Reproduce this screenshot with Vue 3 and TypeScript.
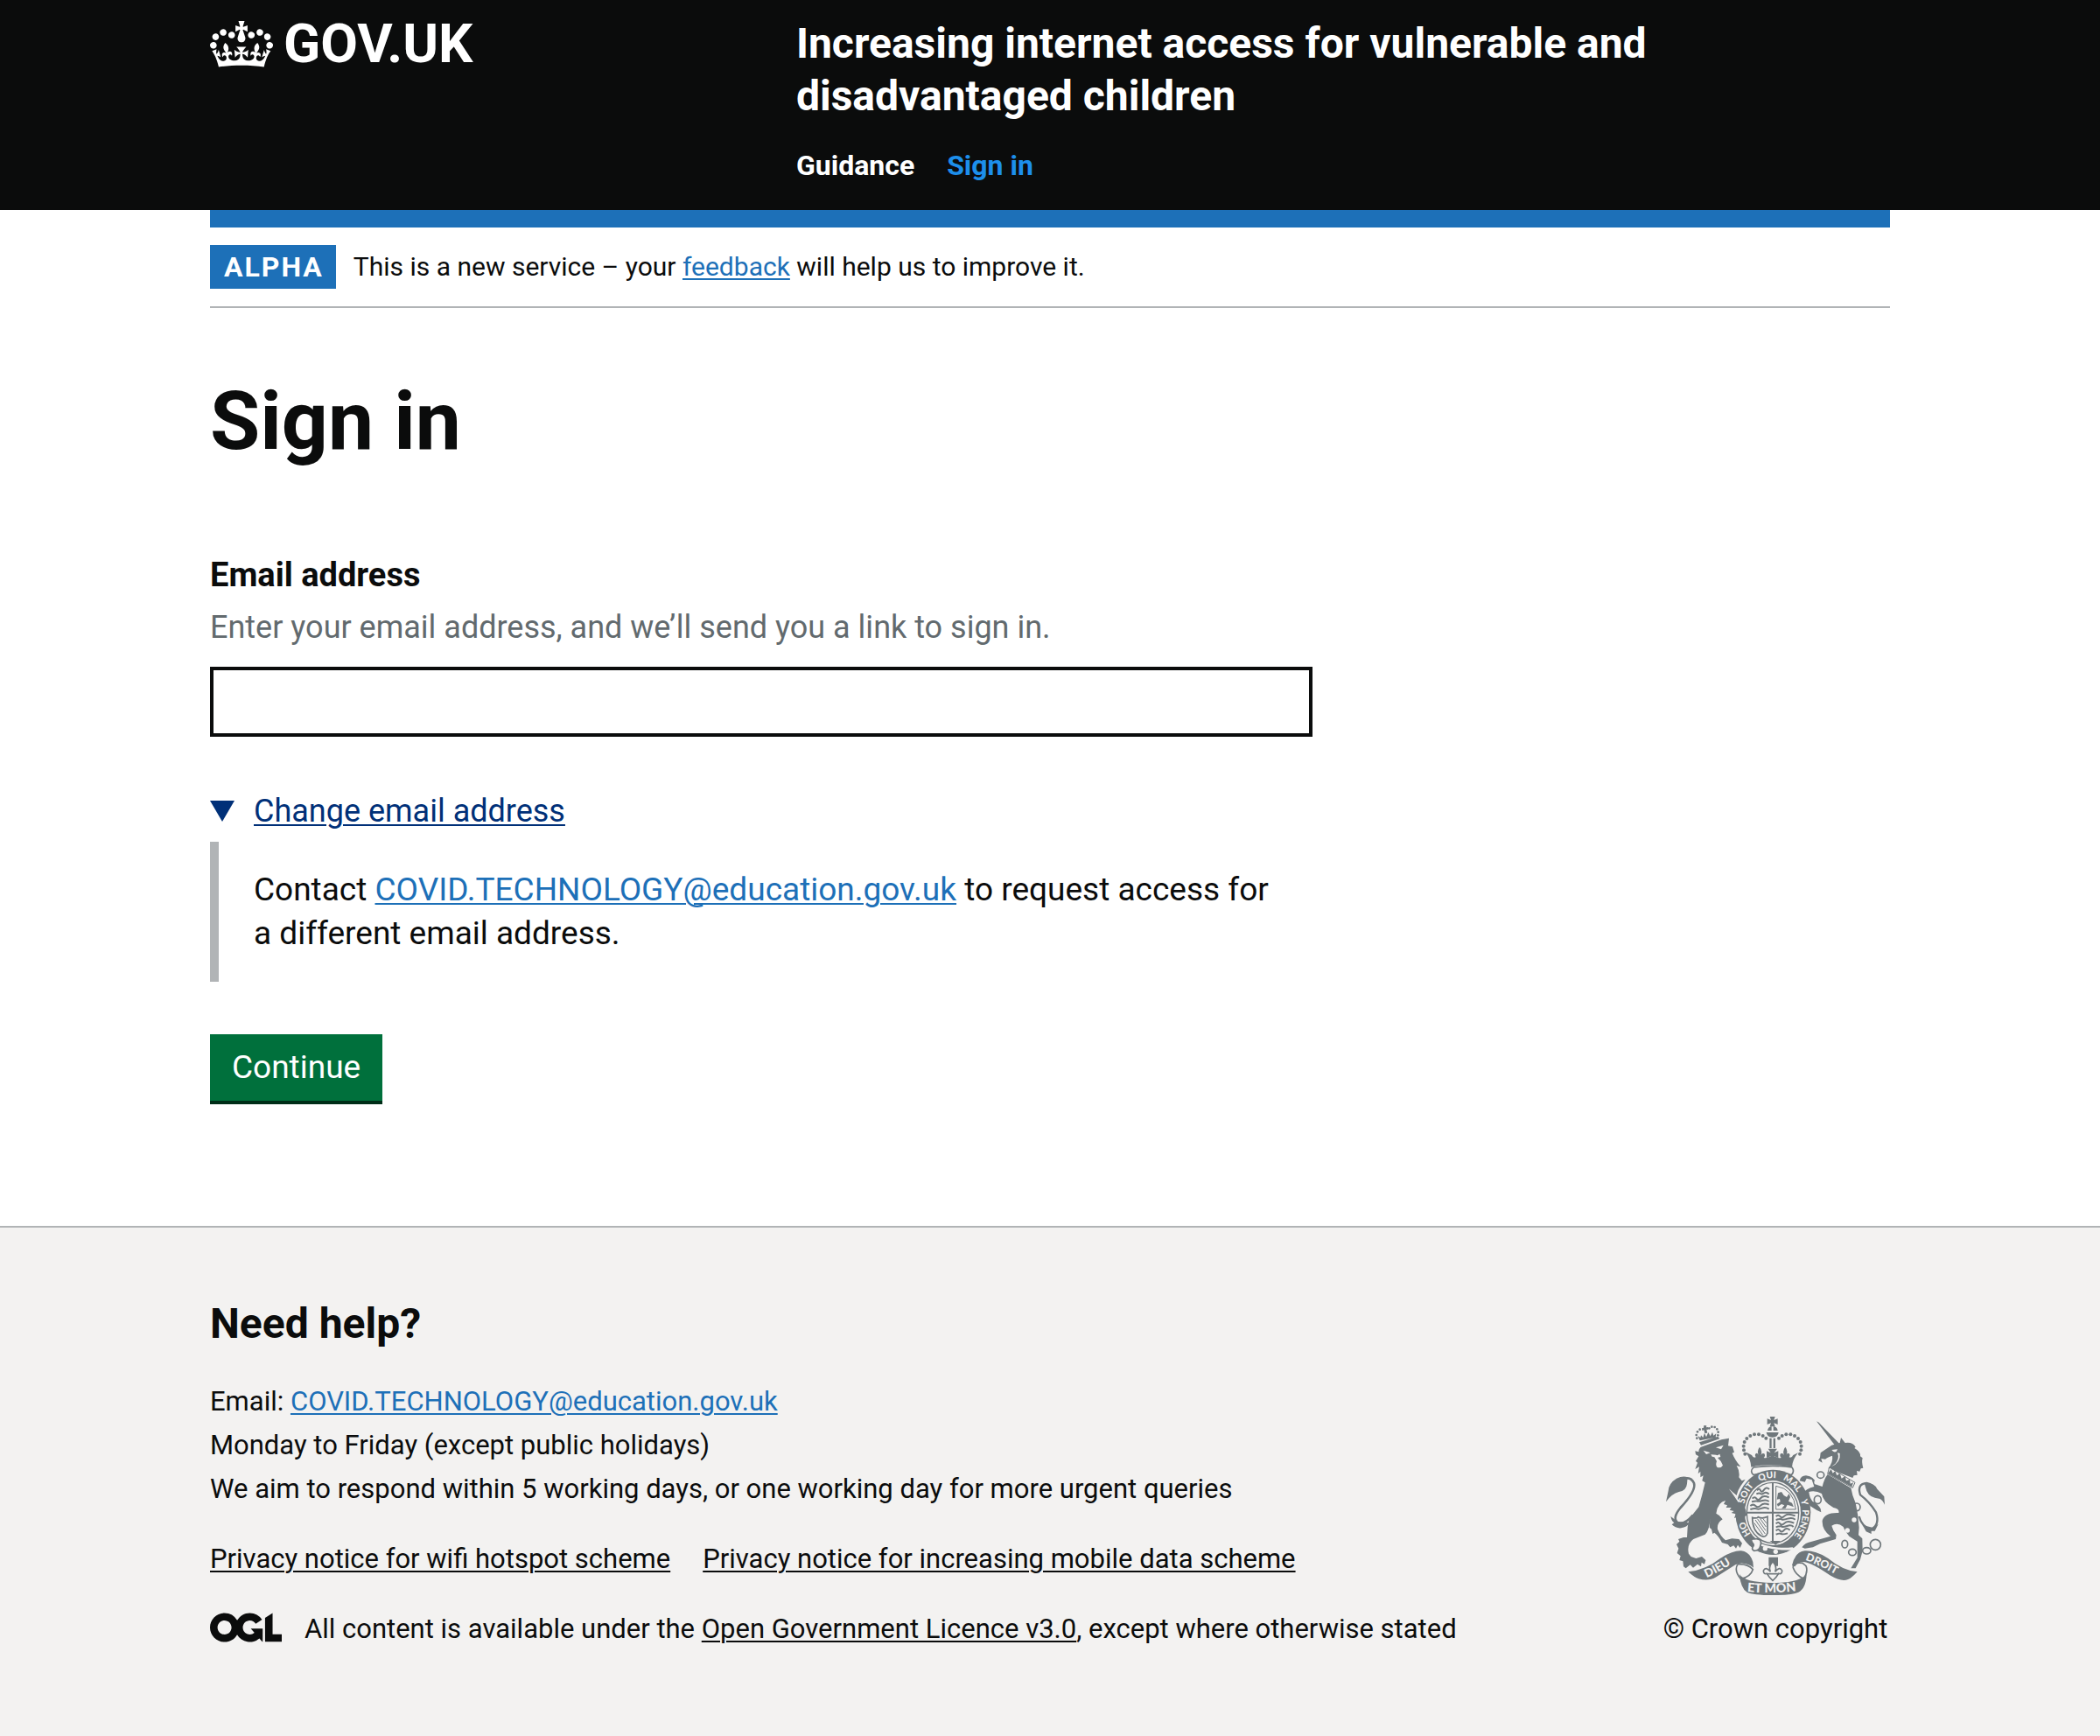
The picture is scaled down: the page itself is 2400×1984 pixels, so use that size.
<script setup lang="ts">
import { ref } from 'vue'

const email = ref('')
const supportEmail = 'COVID.TECHNOLOGY@education.gov.uk'

const privacyLinks = [
  'Privacy notice for wifi hotspot scheme',
  'Privacy notice for increasing mobile data scheme',
]

// Pearls on the left arch of the royal crown; the right arch mirrors them.
const pearls = [
  [343, 188], [339, 175], [338, 161], [341, 147], [349, 135],
  [361, 126], [375, 121], [390, 121], [404, 126], [415, 134],
]
const mirror = (x: number) => 874 - x

// Words of the garter motto and how far round the ellipse each one starts.
const motto = [
  { text: 'HO', at: '13%' },
  { text: 'SOIT', at: '29%' },
  { text: 'QUI', at: '43%' },
  { text: 'MAL', at: '55%' },
  { text: 'Y', at: '69%' },
  { text: 'PENSE', at: '74%' },
]
</script>

<template>
  <div class="page">
    <header class="header">
      <div class="container header-row">
        <div class="header-logo">
          <a href="#" class="logo-link">
            <svg class="crown" viewBox="0 0 132 97" aria-hidden="true">
              <path fill="currentColor" fill-rule="evenodd" d="M25 30.2c3.5 1.5 7.7-.2 9.1-3.7 1.5-3.6-.2-7.8-3.9-9.2-3.6-1.4-7.6.3-9.1 3.9-1.4 3.5.3 7.5 3.9 9zM9 39.5c3.6 1.5 7.8-.2 9.2-3.7 1.5-3.6-.2-7.8-3.9-9.1-3.6-1.5-7.6.2-9.1 3.8-1.4 3.5.3 7.5 3.8 9zM4.4 57.2c3.5 1.5 7.7-.2 9.1-3.8 1.5-3.6-.2-7.7-3.9-9.1-3.5-1.5-7.6.3-9.1 3.8-1.4 3.5.3 7.6 3.9 9.1zm38.3-21.4c3.5 1.5 7.7-.2 9.1-3.8 1.5-3.6-.2-7.7-3.9-9.1-3.6-1.5-7.6.3-9.1 3.8-1.3 3.6.4 7.7 3.9 9.1zm64.4-5.6c-3.6 1.5-7.8-.2-9.1-3.7-1.5-3.6.2-7.8 3.8-9.2 3.6-1.4 7.7.3 9.2 3.9 1.3 3.5-.4 7.5-3.9 9zm15.9 9.3c-3.6 1.5-7.7-.2-9.1-3.7-1.5-3.6.2-7.8 3.7-9.1 3.6-1.5 7.7.2 9.2 3.8 1.5 3.5-.3 7.5-3.8 9zm4.7 17.7c-3.6 1.5-7.8-.2-9.2-3.8-1.5-3.6.2-7.7 3.9-9.1 3.6-1.5 7.7.3 9.2 3.8 1.3 3.5-.4 7.6-3.9 9.1zM89.3 35.8c-3.6 1.5-7.8-.2-9.2-3.8-1.4-3.6.2-7.7 3.9-9.1 3.6-1.5 7.7.3 9.2 3.8 1.4 3.6-.3 7.7-3.9 9.1zM69.7 17.7l8.9 4.7V9.3l-8.9 2.8c-.2-.3-.5-.6-.9-.9L72.4 0H59.6l3.5 11.2c-.3.3-.6.5-.9.9l-8.8-2.8v13.1l8.8-4.7c.3.3.6.7.9.9l-5 15.4v.1c-.2.8-.4 1.6-.4 2.4 0 4.1 3.1 7.5 7 8.1h.2c.3 0 .7.1 1 .1.4 0 .7 0 1-.1h.2c4-.6 7.1-4.1 7.1-8.1 0-.8-.1-1.7-.4-2.4V34l-5.1-15.4c.4-.2.7-.6 1-.9zM66 92.8c16.9 0 32.8 1.1 47.1 3.2 4-16.9 8.9-26.7 14-33.5l-9.6-3.4c1 4.9 1.1 7.2 0 10.2-1.5-1.4-3-4.3-4.2-8.7L108.6 76c2.8-2 5-3.2 7.5-3.3-4.4 9.4-10 11.9-13.6 11.2-4.3-.8-6.3-4.6-5.6-7.9 1-4.7 5.7-5.9 8-.5 4.3-8.7-3-11.4-7.6-8.8 7.1-7.2 7.9-13.5 2.1-21.1-8 6.1-8.1 12.3-4.5 20.8-4.7-5.4-12.1-2.5-9.5 6.2 3.4-5.2 7.9-2 7.2 3.1-.6 4.3-6.4 7.8-13.5 7.2-10.3-.9-10.9-8-11.2-13.8 2.5-.5 7.1 1.8 11 7.3L80.2 60c-4.1 4.4-8 5.3-12.3 5.4 1.4-4.4 8-11.6 8-11.6H55.5s6.4 7.2 7.9 11.6c-4.2-.1-8-1-12.3-5.4l1.4 16.4c3.9-5.5 8.5-7.7 10.9-7.3-.3 5.8-.9 12.8-11.1 13.8-7.2.6-12.9-2.9-13.5-7.2-.7-5 3.8-8.3 7.1-3.1 2.7-8.7-4.6-11.6-9.4-6.2 3.7-8.5 3.6-14.7-4.6-20.8-5.8 7.6-5 13.9 2.2 21.1-4.7-2.6-11.9.1-7.7 8.8 2.3-5.5 7.1-4.2 8.1.5.7 3.3-1.3 7.1-5.7 7.9-3.5.7-9-1.8-13.5-11.2 2.5.1 4.7 1.3 7.5 3.3l-4.7-15.4c-1.2 4.4-2.7 7.2-4.3 8.7-1.1-3-.9-5.3 0-10.2l-9.5 3.4c5 6.9 9.9 16.7 14 33.5 14.8-2.1 30.8-3.2 47.7-3.2z" />
            </svg>
            <span>GOV.UK</span>
          </a>
        </div>
        <div class="header-content">
          <a href="#" class="service-name">Increasing internet access for vulnerable and disadvantaged children</a>
          <nav class="nav">
            <a href="#">Guidance</a>
            <a href="#" class="active" aria-current="page">Sign in</a>
          </nav>
        </div>
      </div>
    </header>

    <div class="container body">
      <div class="phase-banner">
        <strong class="tag">ALPHA</strong>
        <span>This is a new service – your <a href="#" class="link">feedback</a> will help us to improve it.</span>
      </div>

      <main class="main">
        <h1>Sign in</h1>
        <form @submit.prevent>
          <label for="email">Email address</label>
          <p id="email-hint" class="hint">Enter your email address, and we’ll send you a link to sign in.</p>
          <input id="email" v-model="email" type="email" aria-describedby="email-hint" />
          <details open>
            <summary><span>Change email address</span></summary>
            <div class="details-text">
              Contact <a href="#" class="link">{{ supportEmail }}</a> to request access for a different email address.
            </div>
          </details>
          <button type="submit">Continue</button>
        </form>
      </main>
    </div>

    <footer class="footer">
      <div class="container footer-row">
        <div class="footer-main">
          <h2>Need help?</h2>
          <p>
            Email: <a href="#" class="link">{{ supportEmail }}</a><br />
            Monday to Friday (except public holidays)<br />
            We aim to respond within 5 working days, or one working day for more urgent queries
          </p>
          <ul class="footer-links">
            <li v-for="item in privacyLinks" :key="item"><a href="#">{{ item }}</a></li>
          </ul>
          <div class="licence">
            <svg class="ogl" viewBox="0 0 483.2 195.7" aria-hidden="true">
              <path fill="currentColor" d="M421.5 142.8V.1l-50.7 32.3v161.1h112.4v-50.7zm-122.3-9.6A47.12 47.12 0 0 1 221 97.8c0-26 21.1-47.1 47.1-47.1 16.7 0 31.4 8.7 39.7 21.8l42.7-27.2A97.63 97.63 0 0 0 268.1 0c-36.5 0-68.3 20.1-85.1 49.7A98 98 0 0 0 97.8 0C43.9 0 0 43.9 0 97.8s43.9 97.8 97.8 97.8c36.5 0 68.3-20.1 85.1-49.7a97.76 97.76 0 0 0 149.6 25.4l19.4 22.2h3v-87.8h-80l24.3 27.5zM97.8 145c-26 0-47.1-21.1-47.1-47.1s21.1-47.1 47.1-47.1 47.1 21.1 47.1 47.1S123.8 145 97.8 145" />
            </svg>
            <span>All content is available under the <a href="#">Open Government Licence v3.0</a>, except where otherwise stated</span>
          </div>
        </div>

        <a href="#" class="copyright">
          <svg class="crest" viewBox="72 60 750 612" aria-hidden="true">
            <g class="ink">
              <!-- Royal crown -->
              <template v-for="[x, y] in pearls" :key="`${x}-${y}`">
                <circle :cx="x" :cy="y" r="6" />
                <circle :cx="mirror(x)" :cy="y" r="6" />
              </template>
              <path d="M428 60h18l-4 12 13-5v20l-13-5 4 12h-18l4-12-13 5V67l13 5z" />
              <path d="M420 108q2-14 14-15v15zm20-15q13 1 15 15h-15zM416 114h42q-2 17-21 17t-21-17z" />
              <path d="M427 134h7v34h-7zm13 0h7v34h-7zM422 170h31l-10 14 14-6v24l-14-6 7 10h-26l7-10-14 6v-24l14 6z" />
              <path d="M350 184l16 8q6 12 14 7-6-10 2-14 7 0 8 8-8-16 3-29 11 13 4 29 4-10 12-6 5 8-2 14 10 2 18-3h24q10 6 18 3-7-6-2-14 8-4 12 6-7-16 4-29 11 13 3 29 1-8 8-8 8 4 2 14 8 5 14-7l17-8q-20 24-21 49-30-7-70-7t-70 7q-2-28-18-49z" />
              <path class="line" d="M372 234q66-10 132 0 10 14-2 26-66-18-130 0-14-12 0-26z" stroke-width="5" />

              <!-- Garter and belt -->
              <ellipse cx="439" cy="388" rx="129" ry="146" />
              <ellipse class="paper" cx="438" cy="390" rx="96" ry="111" />
              <ellipse class="line" cx="438" cy="390" rx="89" ry="104" stroke-width="4" />
              <path d="M351 386h176v6H351zM435 287h6v208h-6z" />

              <!-- Quarters: three lions, rampant lion, harp -->
              <g class="line" stroke-width="6">
                <path d="M384 313q8-10 12 0t12-2 18-2M382 325q10-4 14-1t12-2 17 4" />
                <path d="M368 341q8-9 14 0t15-2 28-2M366 352q14-4 18-2t18-2 23 3" />
                <path d="M361 366q10-8 18 0t18-2 28-2M361 378q16-5 22-2t18-2 24 3" />
                <path d="M449 402q8-8 14 0t16-2 36 0M449 414q16-5 20-2t20-2 26 3" />
                <path d="M449 427q8-8 14 0t16-2 32 0M449 439q16-5 20-2t18-2 22 3" />
                <path d="M449 451q8-8 14 0t14-2 20 0M449 464q12-5 18-2t22-2" />
              </g>
              <path class="line" stroke-width="3" d="M449 298q62 10 68 80h-68z" />
              <path d="M456 322l12-4 8 12 10 6 8-12 4 12-6 14 12 6 6 14-10-4-12-4-6 12-14 2 10-12-10-4-12 8-4-8 12-8-2-10-10 2z" />
              <path class="line" stroke-width="5" d="M368 406q16 4 20-2 14 8 32-1v56q-6 18-22 10-30-16-30-63z" />
              <path class="line" stroke-width="3" d="M378 414l34 48M386 411l28 40M395 410l20 28M404 409l12 16M374 424l30 42" />
              <path class="paper" d="M372 484Q430 516 506 508L514 516Q440 524 368 492Z" />
              <circle class="paper" cx="412" cy="512" r="8" />
              <circle class="paper" cx="448" cy="523" r="8" />
              <path class="buckle" d="M374 480q-14-2-6 12 8 8 2 14-6 8 4 14 16 0 20-12 6-14 2-24-10-8-22-4z" />
              <path d="M424 542h32v30h-32zM428 486h36l-16 14z" />
              <path class="fleur" d="M438 556q-16 18-8 36-16-20-24-4 0 14 12 10 8 14 20 24 12-10 20-24 12 4 12-10-8-16-24 4 8-18-8-36z" />
              <path class="line" stroke-width="5" d="M418 599h40" />

              <!-- Lion -->
              <path d="M172 178L184 181Q184 167 196 163L262 139L288 134L285 160L300 163L306 182L299 185Q308 208 328 232L314 228Q326 248 322 268L332 280L344 275L328 298Q318 312 314 330L288 308L345 378L349 398L340 404L338 417L331 408L322 418L317 404L306 408L311 394L296 390L305 384L290 380L296 372L278 372L282 364L270 360L276 348Q250 352 244 392Q258 398 266 412Q246 424 249 446Q258 468 276 484L298 478L322 480L333 494L326 510L318 500L312 512L304 502L292 508L284 498L264 492Q252 468 238 458L232 462L228 446L221 440L224 404Q222 448 206 464L166 480Q142 498 150 530L158 540L175 546L195 540L208 552L204 566L194 560L192 574L180 566L165 578L155 568L140 580L132 574L130 556L118 552L122 538L110 528L115 512L108 498L118 488L114 480L132 474L144 474L146 440Q148 410 165 394L184 370Q196 330 206 286L196 280L200 262L190 268V248L182 256L186 232L172 240L180 218L174 212L184 196L174 190Z" />
              <path class="paper" d="M200 176l24 8-14 5zM243 166l26-8-8 14zM226 190l18 1q4 4 12-3l3 10-10 3q14 12 18 26-8 12-20 6-6-8-1-20l-8-14-8-2zM288 306l36 44-4 4z" />
              <path class="line" stroke-width="8" d="M164 398Q136 432 112 424Q92 408 122 372Q176 314 168 288Q156 264 134 274" />
              <path d="M146 268q-16-6-38 4-26 16-28 42-4 20-8 38 20-28 44-34 26-4 28-28zM88 402q4 18 12 22l-8 6q14 14 32 12 20-2 28-18l-40-4z" />
              <path d="M186 148l64-20 6 8-64 22zM188 142l-7-16 9 6 2-8 7 8 5-16 6 14 7-16 7 13 7-14 4 12 9-7-2 13zM202 90l9 1-1 6 6-1 1 8-6 0 3 12-9 1-3-11-6 2-1-8 6-2z" />
              <g>
                <circle cx="178" cy="134" r="4" /><circle cx="176" cy="123" r="4" /><circle cx="180" cy="112" r="4" />
                <circle cx="188" cy="104" r="4" /><circle cx="220" cy="100" r="4" /><circle cx="229" cy="95" r="4" />
                <circle cx="239" cy="96" r="4" /><circle cx="247" cy="103" r="4" />
                <circle cx="251" cy="113" r="4" /><circle cx="250" cy="124" r="4" />
              </g>

              <!-- Unicorn -->
              <path d="M588 76l8 4 70 72-14 8z" />
              <path d="M600 200l2-16 38-26 28-8 4-18 14 18q26-4 36 14l-4 4q22 12 20 28l8 6q-4 14 2 34l-8 2-4 10-10-2 2 14-12 2-4 8-84-32q18-24 14-44-18 6-24 12l-14-2 4 14-14-8z" />
              <path class="paper" d="M640 174l20-2-4 8q-10 4-16-6zM660 184q8 20-8 38l-14 10q34-14 30-46z" />
              <path d="M626 258L706 304Q710 330 722 356Q732 400 734 440L732 466L745 478L746 520L738 550L722 580H706L728 544V488L700 470Q684 450 680 438Q660 420 640 434Q644 450 656 466L654 480L600 496L576 508L548 512L538 508Q548 492 572 488L636 470Q606 448 608 416Q616 388 664 390Q668 376 646 372Q610 352 606 324Q584 312 562 318Q564 338 574 350Q592 358 602 376L604 388L588 380L566 366Q556 344 546 322Q548 308 580 300L572 276L554 272L548 284L530 280Q534 262 552 262Q580 264 590 294L608 300Q614 274 626 258Z" />
              <path class="paper" d="M632 234l88 52-8 22-88-52z" />
              <path d="M638 240l6 14 8-8 6 16 10-8 6 18 12-8 4 16 12-4 2 14 10-4-5 15-82-46z" />
              <path class="line" stroke-width="3" d="M632 234l88 52-8 18-86-48z" />
              <path class="line" stroke-width="7" d="M734 402Q744 440 776 446Q806 430 792 388Q770 352 738 328Q726 290 760 288Q772 290 780 298" />
              <path d="M752 288q32-4 44 20l24 26 2 28q-8-16-16-20l-18-4q-26-6-32-36zM746 432l12 22 18 8 0-10 12 0 12-24-20 12z" />
              <g class="chain">
                <ellipse cx="602" cy="260" rx="12" ry="11" />
                <ellipse cx="592" cy="345" rx="12" ry="14" />
                <ellipse cx="726" cy="370" rx="12" ry="13" />
                <ellipse cx="685" cy="497" rx="10" ry="13" />
                <ellipse cx="711" cy="525" rx="13" ry="11" />
                <ellipse cx="760" cy="520" rx="14" ry="11" />
                <circle cx="790" cy="499" r="18" />
              </g>
              <circle class="paper" cx="588" cy="285" r="8" />
              <circle class="paper" cx="717" cy="414" r="8" />
              <circle class="paper" cx="694" cy="450" r="8" />

              <!-- Scroll -->
              <path d="M148 592q60-6 110-46 44-28 72-26 30 4 40 38l2 20q-14-12-32-14-12-4-30 4l-66 42q-26 16-60 6-14-4-36-24z" />
              <path d="M728 592q-50-4-100-46-44-28-80-26-34 4-44 50l10 4q10-16 30-16 30 4 90 46 40 24 62 14 12-4 32-26z" />
              <path class="line" stroke-width="5" d="M318 566q-14 22 10 50 34-6 42-32-18-20-52-18M540 562q-34-4-32 16 8 24 36 38 16-24 8-44z" />
              <path d="M324 600q14 28 114 30 92 0 116-30-2 50-28 62-20 10-88 10t-88-10q-22-12-26-62z" />
            </g>
            <defs>
              <path id="garter-line" d="M439 502A101 116 0 0 1 439 270A101 116 0 0 1 439 502" />
              <path id="scroll-left" d="M212 612Q262 590 326 544" />
              <path id="scroll-base" d="M350 660Q438 668 534 656" />
              <path id="scroll-right" d="M549 552Q586 562 684 618" />
            </defs>
            <g class="lettering">
              <text v-for="word in motto" :key="word.text" font-size="31">
                <textPath href="#garter-line" :startOffset="word.at">{{ word.text }}</textPath>
              </text>
              <text font-size="40"><textPath href="#scroll-left">DIEU</textPath></text>
              <text font-size="43"><textPath href="#scroll-base">ET MON</textPath></text>
              <text font-size="37"><textPath href="#scroll-right">DROIT</textPath></text>
            </g>
          </svg>
          <span>© Crown copyright</span>
        </a>
      </div>
    </footer>
  </div>
</template>

<style>
body {
  margin: 0;
  background: #f3f2f1;
}
</style>

<style scoped>
.page {
  display: flex;
  flex-direction: column;
  min-height: 100vh;
  background: #fff;
  color: #0b0c0c;
  font-family: "Roboto", sans-serif;
  font-size: 31px;
  line-height: 50px;
}
.container {
  box-sizing: border-box;
  width: calc(100% - 60px);
  max-width: 1920px;
  margin: 0 auto;
}
h1,
h2,
p,
ul {
  margin: 0;
  padding: 0;
}
a {
  color: inherit;
  text-decoration-thickness: 2px;
  text-underline-offset: 3px;
}
.link {
  color: #1d70b8;
}

.header {
  padding: 20px 0 26px;
  background: #0b0c0c;
  color: #fff;
  font-weight: 700;
}
.header a {
  text-decoration: none;
}
.header-row {
  display: flex;
}
.header-logo {
  flex: none;
  width: 33.33%;
}
.logo-link {
  display: inline-flex;
  align-items: center;
  gap: 12px;
  font-size: 62px;
  line-height: 60px;
}
.crown {
  width: 72px;
  height: 53px;
}
.header-content {
  flex: 1;
  padding-left: 30px;
}
.service-name {
  display: block;
  margin-bottom: 24px;
  font-size: 48px;
  line-height: 60px;
}
.nav {
  display: flex;
  gap: 37px;
  font-size: 32px;
}
.nav .active {
  color: #1d8feb;
}

.body {
  border-top: 20px solid #1d70b8;
}
.phase-banner {
  display: flex;
  align-items: center;
  gap: 20px;
  padding: 20px 0;
  border-bottom: 2px solid #b1b4b6;
  font-size: 30px;
}
.tag {
  padding: 0 14px 0 16px;
  background: #1d70b8;
  color: #fff;
  font-size: 32px;
  letter-spacing: 2px;
}

.main {
  padding: 80px 0 143px;
}
h1 {
  margin-bottom: 100px;
  font-size: 93px;
  line-height: 100px;
}
form {
  display: flex;
  flex-direction: column;
  align-items: flex-start;
  width: 65.63%;
}
label {
  margin-bottom: 10px;
  font-size: 38px;
  font-weight: 700;
}
.hint {
  margin-bottom: 20px;
  color: #626a6e;
  font-size: 36px;
}
input {
  box-sizing: border-box;
  width: 100%;
  height: 80px;
  margin-bottom: 60px;
  padding: 10px;
  border: 4px solid #0b0c0c;
  border-radius: 0;
  background: #fff;
  font: inherit;
  font-size: 37px;
}
details {
  width: 100%;
  margin-bottom: 60px;
}
summary {
  display: flex;
  align-items: center;
  gap: 22px;
  margin-bottom: 10px;
  color: #003078;
  font-size: 36px;
  text-decoration: underline;
  text-decoration-thickness: 2px;
  text-underline-offset: 3px;
  cursor: pointer;
}
summary::before {
  content: "";
  border: 14px solid transparent;
  border-top: 24px solid #003078;
  border-bottom: 0;
}
.details-text {
  padding: 30px 30px 30px 40px;
  border-left: 10px solid #b1b4b6;
  font-size: 37px;
}
button {
  height: 76px;
  padding: 0 25px;
  border: 0;
  background: #00703c;
  box-shadow: 0 4px 0 #002d18;
  color: #fff;
  font: inherit;
  font-size: 37px;
  cursor: pointer;
}

.footer {
  flex: 1;
  padding: 80px 0;
  border-top: 2px solid #b1b4b6;
  background: #f3f2f1;
}
.footer-row {
  display: flex;
  align-items: flex-end;
  justify-content: space-between;
}
h2 {
  margin-bottom: 34px;
  font-size: 48px;
  line-height: 60px;
}
.footer-links {
  display: flex;
  gap: 37px;
  margin: 30px 0;
  list-style: none;
}
.licence {
  display: flex;
  align-items: flex-start;
  gap: 26px;
}
.ogl {
  width: 82px;
  height: 34px;
  padding-top: 6px;
}
.copyright {
  display: flex;
  flex-direction: column;
  align-items: center;
  gap: 14px;
  min-width: 262px;
  text-decoration: none;
}
.crest {
  width: 250px;
  height: 204px;
}
.ink {
  fill: #6f777b;
}
.line,
.chain {
  fill: none;
  stroke: #6f777b;
}
.chain {
  stroke-width: 5px;
}
.paper {
  fill: #f3f2f1;
}
.buckle,
.fleur {
  fill: #f3f2f1;
  stroke: #6f777b;
  stroke-width: 5px;
}
.lettering {
  fill: #f3f2f1;
  font-family: "Lato", sans-serif;
  font-weight: 900;
}
</style>
